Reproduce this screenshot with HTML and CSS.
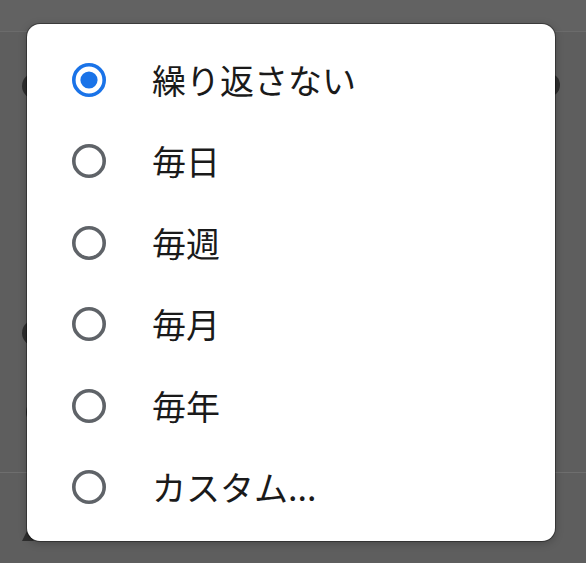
FILE: index.html
```html
<!DOCTYPE html>
<html lang="ja">
<head>
<meta charset="utf-8">
<title>繰り返し</title>
<link rel="stylesheet" href="styles.css">
</head>
<body>
<div class="page">
  <div class="page-header"></div>
  <div class="page-row row-a">
    <span class="bg-icon bg-icon-left"></span>
    <span class="bg-icon bg-icon-right"></span>
  </div>
  <div class="page-row row-b">
    <span class="bg-icon bg-icon-left"></span>
  </div>
  <div class="page-row row-c">
    <span class="bg-icon bg-icon-left small"></span>
  </div>
  <div class="page-divider"></div>
  <div class="page-row row-d">
    <span class="bg-tri"></span>
  </div>
</div>

<div class="dialog" role="radiogroup">
  <div class="option">
    <svg class="radio" viewBox="0 0 34 34" width="34" height="34"><circle cx="17" cy="17" r="15.2" fill="none" stroke="#1a73e8" stroke-width="3.6"/><circle cx="17" cy="17" r="8.6" fill="#1a73e8"/></svg>
    <span class="label">繰り返さない</span>
  </div>
  <div class="option">
    <svg class="radio" viewBox="0 0 34 34" width="34" height="34"><circle cx="17" cy="17" r="15.2" fill="none" stroke="#5f6368" stroke-width="3.6"/></svg>
    <span class="label">毎日</span>
  </div>
  <div class="option">
    <svg class="radio" viewBox="0 0 34 34" width="34" height="34"><circle cx="17" cy="17" r="15.2" fill="none" stroke="#5f6368" stroke-width="3.6"/></svg>
    <span class="label">毎週</span>
  </div>
  <div class="option">
    <svg class="radio" viewBox="0 0 34 34" width="34" height="34"><circle cx="17" cy="17" r="15.2" fill="none" stroke="#5f6368" stroke-width="3.6"/></svg>
    <span class="label">毎月</span>
  </div>
  <div class="option">
    <svg class="radio" viewBox="0 0 34 34" width="34" height="34"><circle cx="17" cy="17" r="15.2" fill="none" stroke="#5f6368" stroke-width="3.6"/></svg>
    <span class="label">毎年</span>
  </div>
  <div class="option">
    <svg class="radio" viewBox="0 0 34 34" width="34" height="34"><circle cx="17" cy="17" r="15.2" fill="none" stroke="#5f6368" stroke-width="3.6"/></svg>
    <span class="label">カスタム...</span>
  </div>
</div>
</body>
</html>
```

FILE: styles.css
```css
html, body {
  margin: 0;
  padding: 0;
  width: 586px;
  height: 563px;
  overflow: hidden;
  background: #5e5e5e;
  font-family: "Noto Sans CJK JP", "Noto Sans", sans-serif;
}

.page {
  position: relative;
  width: 586px;
  height: 563px;
}

.page-header {
  height: 31px;
  border-bottom: 1px solid #6b6b6b;
  background: #626262;
}

.page-row {
  display: flex;
  align-items: flex-end;
  justify-content: space-between;
  padding: 0 26px 0 22px;
}

.row-a { height: 106px; align-items: flex-start; }
.row-a .bg-icon { margin-top: 41px; }
.row-b { height: 208px; }
.row-c { height: 79px; }
.row-d { height: 68px; }

.bg-icon {
  display: block;
  width: 26px;
  height: 26px;
  border-radius: 50%;
  background: #2e2e2e;
}

.bg-icon-right {
  width: 24px;
  height: 24px;
}

.bg-icon.small {
  margin-left: 4px;
}

.page-divider {
  height: 1px;
  background: #6e6e6e;
  margin-top: 47px;
}

.bg-tri {
  display: block;
  width: 0;
  height: 0;
  border-left: 6px solid transparent;
  border-right: 6px solid transparent;
  border-bottom: 12px solid #2e2e2e;
}

.dialog {
  position: absolute;
  left: 27px;
  top: 24px;
  width: 528px;
  height: 517px;
  box-sizing: border-box;
  padding: 15px 0 13px;
  background: #ffffff;
  border-radius: 13px;
  box-shadow: 0 0 0 1px rgba(0, 0, 0, 0.35), 0 2px 8px rgba(0, 0, 0, 0.25);
  display: flex;
  flex-direction: column;
}

.option {
  height: 81.5px;
  display: flex;
  align-items: center;
  padding-left: 45px;
}

.radio {
  flex: none;
  display: block;
}

.label {
  margin-left: 46px;
  font-size: 34px;
  line-height: 1;
  color: #1a1a1a;
  white-space: nowrap;
}
```
